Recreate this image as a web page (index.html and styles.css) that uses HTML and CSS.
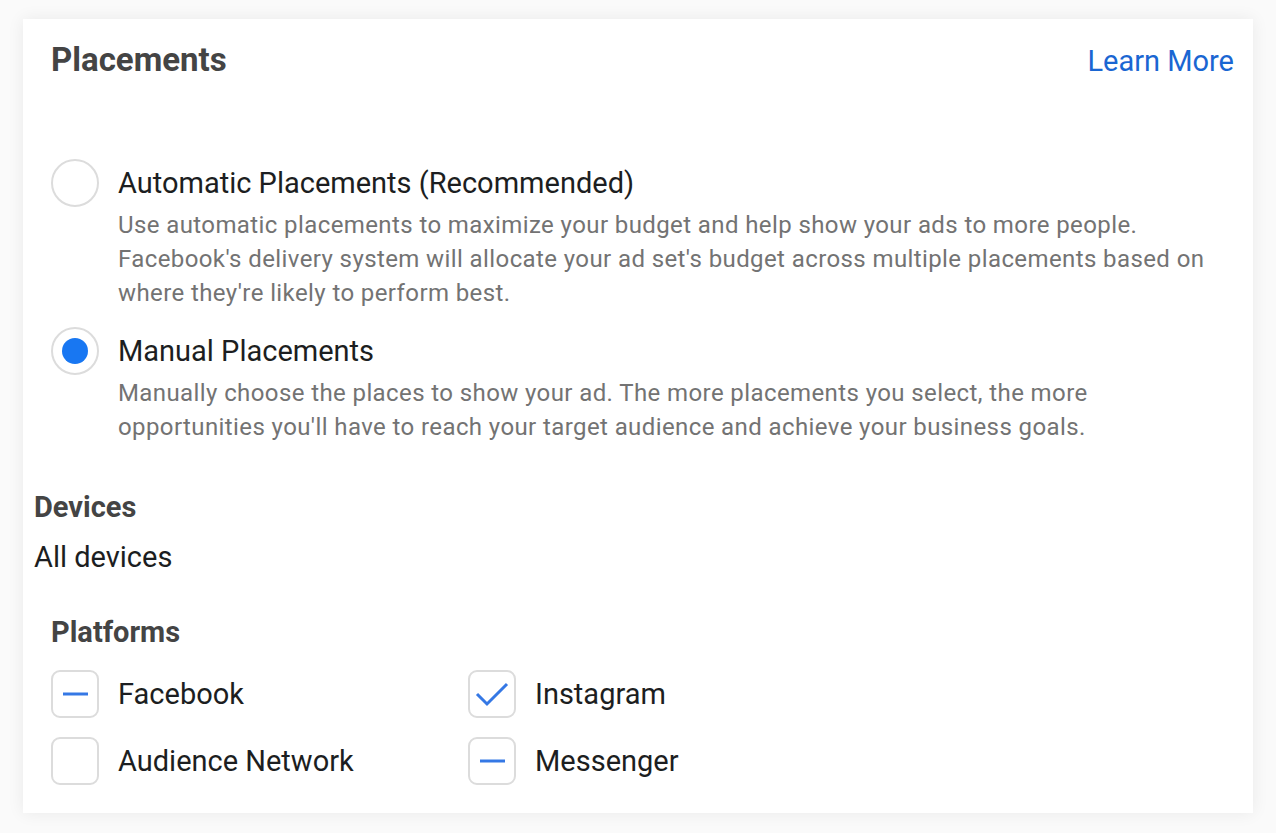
FILE: index.html
```html
<!DOCTYPE html>
<html lang="en">
<head>
<meta charset="utf-8">
<title>Placements</title>
<link rel="stylesheet" href="styles.css">
</head>
<body>
<div class="page">
  <section class="card">
    <header class="card-header">
      <h1 class="card-title">Placements</h1>
      <a class="learn-more" href="#">Learn More</a>
    </header>

    <div class="options">
      <label class="option">
        <span class="radio"></span>
        <span class="option-body">
          <span class="option-title">Automatic Placements (Recommended)</span>
          <span class="option-desc">Use automatic placements to maximize your budget and help show your ads to more people. Facebook's delivery system will allocate your ad set's budget across multiple placements based on where they're likely to perform best.</span>
        </span>
      </label>
      <label class="option">
        <span class="radio radio-on"><span class="radio-dot"></span></span>
        <span class="option-body">
          <span class="option-title">Manual Placements</span>
          <span class="option-desc">Manually choose the places to show your ad. The more placements you select, the more opportunities you'll have to reach your target audience and achieve your business goals.</span>
        </span>
      </label>
    </div>

    <div class="devices">
      <h2 class="section-title">Devices</h2>
      <div class="devices-value">All devices</div>
    </div>

    <div class="platforms">
      <h2 class="section-title">Platforms</h2>
      <div class="platform-grid">
        <label class="platform">
          <span class="checkbox"><svg viewBox="0 0 48 48" width="48" height="48"><line x1="12" y1="24" x2="37" y2="24" class="mark"/></svg></span>
          <span class="platform-name">Facebook</span>
        </label>
        <label class="platform">
          <span class="checkbox"><svg viewBox="0 0 48 48" width="48" height="48"><polyline points="9,24 19,34 39,14" class="mark"/></svg></span>
          <span class="platform-name">Instagram</span>
        </label>
        <label class="platform">
          <span class="checkbox"></span>
          <span class="platform-name">Audience Network</span>
        </label>
        <label class="platform">
          <span class="checkbox"><svg viewBox="0 0 48 48" width="48" height="48"><line x1="12" y1="24" x2="37" y2="24" class="mark"/></svg></span>
          <span class="platform-name">Messenger</span>
        </label>
      </div>
    </div>
  </section>
</div>
</body>
</html>
```
FILE: styles.css
```css
html, body {
  margin: 0;
  padding: 0;
  background: #ffffff;
}

body {
  font-family: Roboto, "Liberation Sans", Arial, sans-serif;
  color: #1c1e21;
}

.page {
  padding: 19px 23px 20px 23px;
  background: #fafafa;
}

.card {
  background: #ffffff;
  box-shadow: 0 0 16px rgba(0, 0, 0, 0.07);
  height: 794px;
  box-sizing: border-box;
  padding: 0 19px 0 28px;
}

.card-header {
  display: flex;
  justify-content: space-between;
  align-items: baseline;
  padding-top: 21px;
}

.card-title {
  margin: 0;
  font-size: 33px;
  line-height: 40px;
  font-weight: 700;
  color: #444444;
}

.learn-more {
  font-size: 29px;
  line-height: 40px;
  color: #1a66d2;
  text-decoration: none;
}

.options {
  display: flex;
  flex-direction: column;
  gap: 24px;
  margin-top: 85px;
}

.option {
  display: grid;
  grid-template-columns: 48px 1fr;
  column-gap: 19px;
  align-items: start;
}

.radio {
  width: 48px;
  height: 48px;
  box-sizing: border-box;
  border: 2px solid #dcdcdc;
  border-radius: 50%;
  margin-top: -7px;
  display: flex;
  align-items: center;
  justify-content: center;
}

.radio-dot {
  width: 26px;
  height: 26px;
  border-radius: 50%;
  background: #1877f2;
}

.option-body {
  display: flex;
  flex-direction: column;
  gap: 8px;
}

.option-title {
  font-size: 29px;
  line-height: 34px;
  color: #1c1e21;
}

.option-desc {
  font-size: 24px;
  letter-spacing: 0.4px;
  line-height: 34px;
  color: #737373;
}

.devices {
  margin-left: -17px;
  margin-top: 46px;
}

.section-title {
  margin: 0;
  font-size: 29px;
  line-height: 34px;
  font-weight: 700;
  color: #444444;
}

.devices-value {
  margin-top: 16px;
  font-size: 29px;
  line-height: 34px;
  color: #1c1e21;
}

.platforms {
  margin-top: 41px;
}

.platform-grid {
  display: grid;
  grid-template-columns: 417px 1fr;
  row-gap: 19px;
  margin-top: 21px;
}

.platform {
  display: flex;
  align-items: center;
  gap: 19px;
}

.checkbox {
  width: 48px;
  height: 48px;
  box-sizing: border-box;
  border: 2px solid #dcdcdc;
  border-radius: 9px;
  position: relative;
  flex: none;
}

.checkbox svg {
  position: absolute;
  left: -2px;
  top: -2px;
}

.mark {
  fill: none;
  stroke: #3578e5;
  stroke-width: 3;
  stroke-linecap: butt;
  stroke-linejoin: miter;
}

.platform-name {
  font-size: 29px;
  line-height: 34px;
  color: #1c1e21;
}
```
